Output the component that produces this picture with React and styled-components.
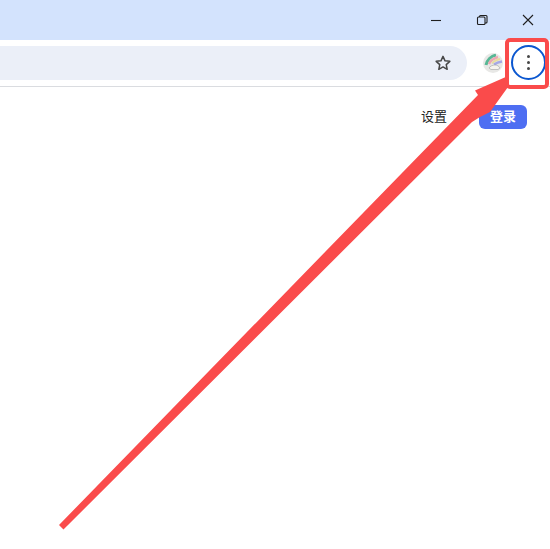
import React from 'react';
import styled, { createGlobalStyle } from 'styled-components';

const GlobalStyle = createGlobalStyle`
  html, body {
    margin: 0;
    padding: 0;
    background: #ffffff;
    overflow: hidden;
  }
`;

const Page = styled.div`
  position: relative;
  width: 550px;
  height: 549px;
  overflow: hidden;
  background: #ffffff;
  font-family: "Liberation Sans", "Noto Sans CJK SC", sans-serif;
`;

const TitleBar = styled.div`
  height: 40px;
  background: #d3e3fd;
  display: flex;
  justify-content: flex-end;
  margin-right: -1px;
`;

const WindowButton = styled.div`
  width: 46px;
  height: 40px;
  display: flex;
  align-items: center;
  justify-content: center;
  color: #1f1f1f;
`;

const Toolbar = styled.div`
  height: 47px;
  box-sizing: border-box;
  border-bottom: 1px solid #dadce0;
  display: flex;
  align-items: flex-start;
`;

const AddressBar = styled.div`
  width: 467px;
  height: 34px;
  margin-top: 6px;
  background: #ebeff8;
  border-radius: 0 17px 17px 0;
  display: flex;
  align-items: center;
  justify-content: flex-end;
  padding-right: 15px;
  box-sizing: border-box;
`;

const Avatar = styled.div`
  width: 20px;
  height: 20px;
  margin: 13px 0 0 16px;
  border-radius: 50%;
  overflow: hidden;
  flex-shrink: 0;
`;

const MenuButton = styled.div`
  width: 35px;
  height: 35px;
  margin: 5px 0 0 8px;
  box-sizing: border-box;
  border: 2px solid #0b57d0;
  border-radius: 50%;
  display: flex;
  flex-direction: column;
  align-items: center;
  justify-content: center;
  gap: 3px;
`;

const Dot = styled.span`
  width: 3px;
  height: 3px;
  border-radius: 50%;
  background: #474747;
`;

const TopLinks = styled.div`
  display: flex;
  justify-content: flex-end;
  align-items: center;
  padding: 18px 23px 0 0;
  gap: 32px;
`;

const LinkText = styled.span`
  font-size: 13px;
  line-height: 24px;
  color: #222222;
`;

const LoginButton = styled.div`
  width: 48px;
  height: 24px;
  border-radius: 6px;
  background: #4e6ef2;
  color: #ffffff;
  font-size: 13px;
  font-weight: 700;
  line-height: 24px;
  text-align: center;
`;

const Highlight = styled.div`
  position: absolute;
  left: 505px;
  top: 38px;
  width: 44px;
  height: 51px;
  box-sizing: border-box;
  border: 4px solid #fa4b4b;
  border-radius: 5px;
`;

const ArrowLayer = styled.svg`
  position: absolute;
  left: 0;
  top: 0;
`;

const App = () => {
  return <Page>
    <GlobalStyle />
    <TitleBar>
      <WindowButton>
        <svg width="12" height="12" viewBox="0 0 12 12"><path d="M1 6.5h10" stroke="currentColor" strokeWidth="1.1" /></svg>
      </WindowButton>
      <WindowButton>
        <svg width="12" height="12" viewBox="0 0 12 12" fill="none" stroke="currentColor" strokeWidth="1.1">
          <rect x="1.5" y="3" width="7.5" height="7.5" rx="1" />
          <path d="M3.5 3V2.5a1 1 0 0 1 1-1H10a1 1 0 0 1 1 1V8a1 1 0 0 1-1 1h-1" />
        </svg>
      </WindowButton>
      <WindowButton>
        <svg width="12" height="12" viewBox="0 0 12 12"><path d="M1 1l10 10M11 1L1 11" stroke="currentColor" strokeWidth="1.1" /></svg>
      </WindowButton>
    </TitleBar>
    <Toolbar>
      <AddressBar>
        <svg width="18" height="18" viewBox="0 0 24 24" fill="none" stroke="#474747" strokeWidth="2" strokeLinejoin="round">
          <path d="M12 3.2l2.7 5.9 6.4.7-4.8 4.3 1.3 6.3L12 17.2l-5.6 3.2 1.3-6.3-4.8-4.3 6.4-.7z" />
        </svg>
      </AddressBar>
      <Avatar>
        <svg width="20" height="20" viewBox="0 0 20 20" fill="none">
          <rect width="20" height="20" fill="#e8e8e6" />
          <path d="M3 12C4 7 8 3 13 2" stroke="#58b795" strokeWidth="3" />
          <path d="M6 11C7 8 10 5.500 15 4" stroke="#eda7b4" strokeWidth="2.500" />
          <path d="M9 10.500C10.500 8.500 13 7 17 6" stroke="#e9dc9e" strokeWidth="2" />
          <path d="M11 11.500C13 10 15 9 19 8.500" stroke="#a5a8e6" strokeWidth="2.500" />
          <path d="M6 15c1-2 4-3 6-3s4 1 5 3l-2 1.500H8z" fill="#f6f4ee" stroke="#a0a0a0" strokeWidth=".6" />
        </svg>
      </Avatar>
      <MenuButton>
        <Dot />
        <Dot />
        <Dot />
      </MenuButton>
    </Toolbar>
    <TopLinks>
      <LinkText>设置</LinkText>
      <LoginButton>登录</LoginButton>
    </TopLinks>
    <ArrowLayer width="550" height="549" viewBox="0 0 550 549">
      <path d="M59 525L63.500 529.500L472 122L480 117L490 112L508 87L508 76L475 90.500L478 95Z" fill="#fa4b4b" />
    </ArrowLayer>
    <Highlight />
  </Page>;
};

export default App;
